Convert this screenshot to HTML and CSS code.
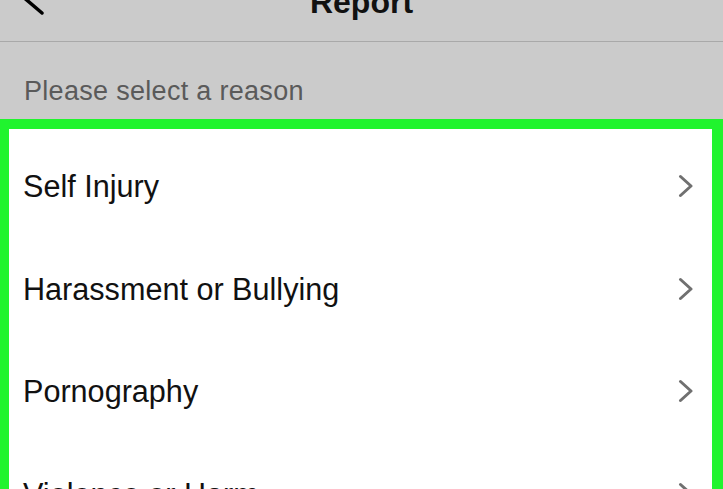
FILE: index.html
```html
<!DOCTYPE html>
<html lang="en">
<head>
<meta charset="utf-8">
<title>Report</title>
<link rel="stylesheet" href="styles.css">
</head>
<body>
<div class="app">
  <header class="topbar">
    <div class="back">
      <svg width="60" height="81" viewBox="0 0 60 81" aria-hidden="true">
        <path d="M42 19 L22 36 L42 53" fill="none" stroke="#000" stroke-width="3.5" stroke-linecap="round" stroke-linejoin="round"/>
      </svg>
    </div>
    <h1 class="title">Report</h1>
    <div class="spacer"></div>
  </header>
  <div class="subhead">Please select a reason</div>
  <section class="panel">
    <ul class="reasons">
      <li class="reason"><span class="label">Self Injury</span><svg class="chev" width="15" height="24" viewBox="0 0 15 24" aria-hidden="true"><path d="M2.5 2.5 L13 12 L2.5 21.5" fill="none" stroke="#707070" stroke-width="3" stroke-linecap="round" stroke-linejoin="round"/></svg></li>
      <li class="reason"><span class="label">Harassment or Bullying</span><svg class="chev" width="15" height="24" viewBox="0 0 15 24" aria-hidden="true"><path d="M2.5 2.5 L13 12 L2.5 21.5" fill="none" stroke="#707070" stroke-width="3" stroke-linecap="round" stroke-linejoin="round"/></svg></li>
      <li class="reason"><span class="label">Pornography</span><svg class="chev" width="15" height="24" viewBox="0 0 15 24" aria-hidden="true"><path d="M2.5 2.5 L13 12 L2.5 21.5" fill="none" stroke="#707070" stroke-width="3" stroke-linecap="round" stroke-linejoin="round"/></svg></li>
      <li class="reason"><span class="label">Violence or Harm</span><svg class="chev" width="15" height="24" viewBox="0 0 15 24" aria-hidden="true"><path d="M2.5 2.5 L13 12 L2.5 21.5" fill="none" stroke="#707070" stroke-width="3" stroke-linecap="round" stroke-linejoin="round"/></svg></li>
    </ul>
  </section>
</div>
</body>
</html>
```

FILE: styles.css
```css
html, body {
  margin: 0;
  padding: 0;
}
body {
  width: 723px;
  height: 489px;
  overflow: hidden;
  background: #cbcbcb;
  font-family: "Liberation Sans", Arial, sans-serif;
}
.app {
  margin-top: -40px;
  display: flex;
  flex-direction: column;
}
.topbar {
  height: 81px;
  display: grid;
  grid-template-columns: 60px 1fr 60px;
  align-items: center;
  border-bottom: 1px solid #a9a9a9;
  background: #cbcbcb;
}
.back {
  height: 81px;
}
.back svg {
  display: block;
}
.title {
  margin: 0;
  padding-top: 3px;
  text-align: center;
  font-size: 32px;
  line-height: 36px;
  font-weight: bold;
  color: #111;
}
.subhead {
  height: 77px;
  box-sizing: border-box;
  padding: 34px 0 0 24px;
  font-size: 27px;
  line-height: 30px;
  letter-spacing: 0.3px;
  color: #5a5a5a;
}
.panel {
  border-style: solid;
  border-color: #20f42e;
  border-width: 10px 11px 0 9px;
  background: #ffffff;
  height: 400px;
}
.reasons {
  list-style: none;
  margin: 0;
  padding: 6px 0 0 0;
}
.reason {
  height: 102.5px;
  display: flex;
  align-items: center;
  justify-content: space-between;
  padding: 0 19px 0 14px;
}
.label {
  font-size: 30.6px;
  line-height: 30px;
  color: #111;
}
.chev {
  display: block;
}
```
